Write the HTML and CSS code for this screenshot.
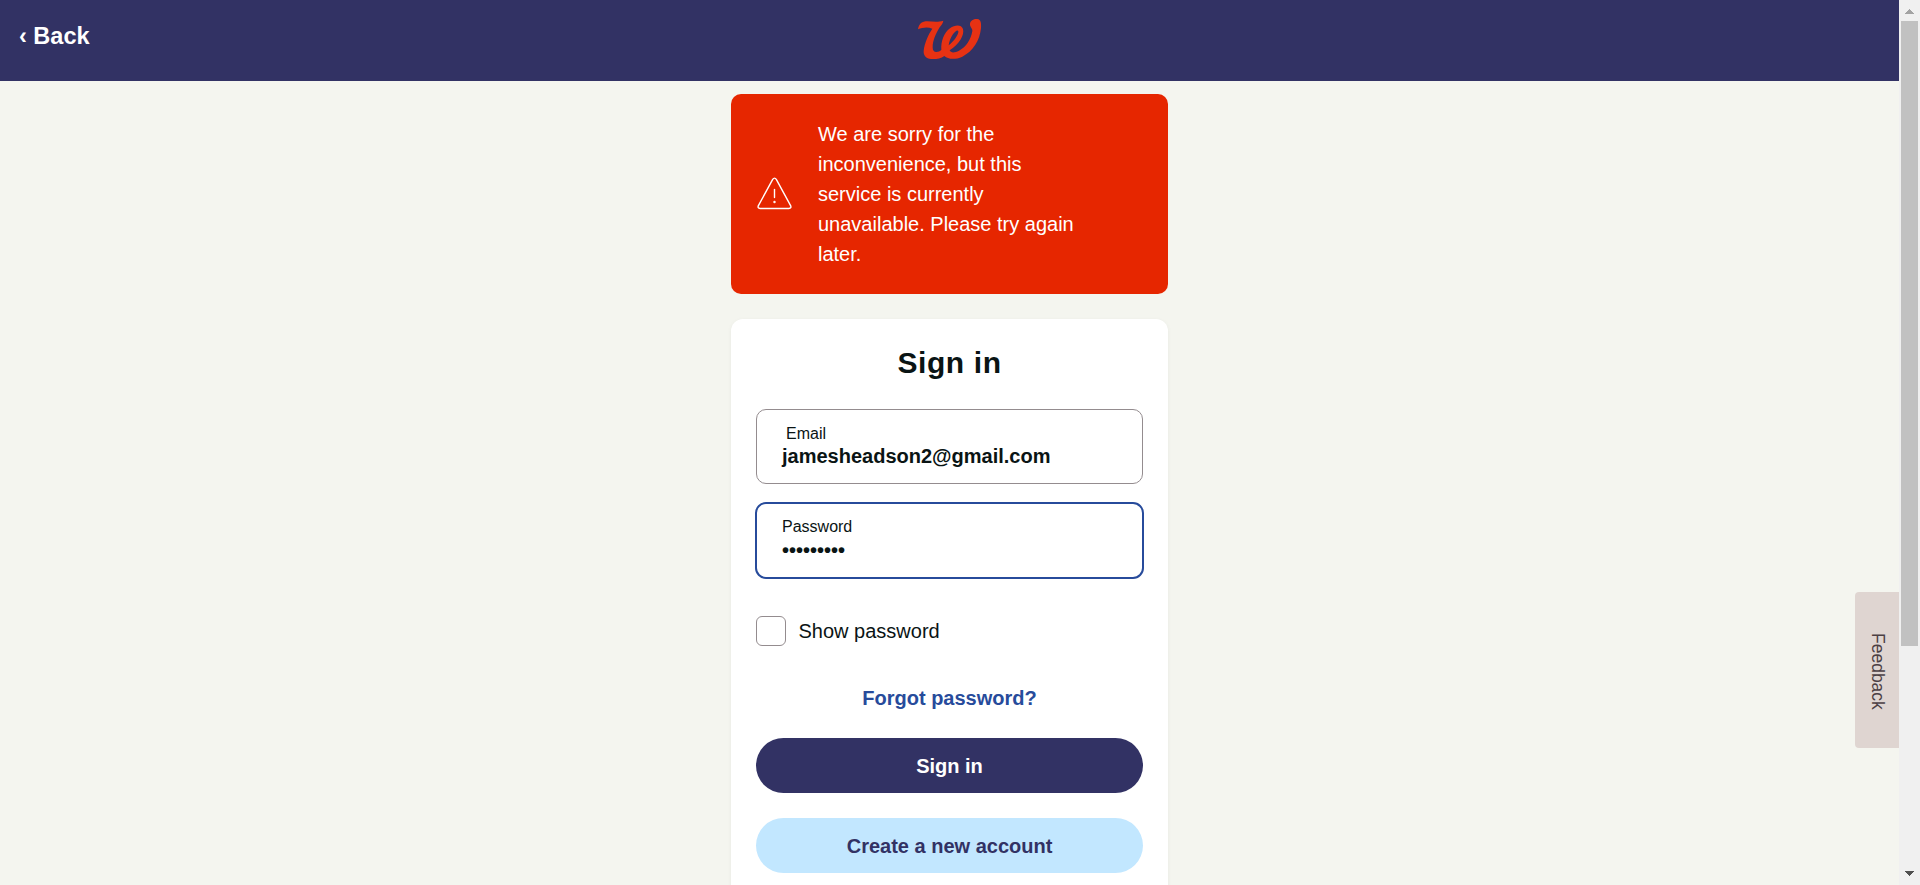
FILE: index.html
```html
<!DOCTYPE html>
<html lang="en">
<head>
<meta charset="utf-8">
<title>Sign in</title>
<link rel="stylesheet" href="styles.css">
</head>
<body>
<div class="viewport">
  <div class="page">
    <header class="header">
      <a class="back">‹ Back</a>
      <svg class="logo" viewBox="0 0 300 195" aria-label="Logo">
        <path fill="#e73213" fill-rule="evenodd" d="M54 73C57 56 66 49 82 49C98 49 113 52 130 47C129 55 124 60 119 67C107 86 98 108 98 127C98 137 102 141 109 141C115 141 120 139 124 135C122 110 132 83 150 70C165 59 184 58 189 72C194 91 176 119 149 136C153 145 165 143 177 137C199 126 213 102 217 78C218 70 209 66 210 56C211 46 222 41 232 42C243 43 244 55 243 70C239 107 219 139 187 155C165 165 144 163 133 153C122 161 107 163 93 162C78 161 70 151 71 138C73 114 86 87 97 71C82 65 67 68 54 73ZM146 121C162 109 176 89 175 79C173 68 150 91 146 121Z"/>
      </svg>
    </header>
    <main class="content">
      <section class="alert">
        <svg class="warning" viewBox="0 0 36 34" fill="none" stroke="#fff" stroke-width="1.4" stroke-linecap="round" stroke-linejoin="round">
          <path d="M15.7 2.4Q17.5-.2 19.3 2.4L33.6 28.6Q34.7 31.3 31.9 31.5H3.1Q.3 31.3 1.4 28.6Z"/>
          <path d="M17.5 12.5V20.5"/>
          <circle cx="17.5" cy="25" r=".5" fill="#fff"/>
        </svg>
        <p class="alert-text">We are sorry for the inconvenience, but this service is currently unavailable. Please try again later.</p>
      </section>
      <section class="card">
        <h1 class="title">Sign in</h1>
        <div class="field">
          <span class="label label-email">Email</span>
          <span class="value">jamesheadson2@gmail.com</span>
        </div>
        <div class="field focused">
          <span class="label">Password</span>
          <span class="value dots">•••••••••</span>
        </div>
        <div class="show"><span class="checkbox"></span>Show password</div>
        <a class="forgot">Forgot password?</a>
        <div class="button primary">Sign in</div>
        <div class="button secondary">Create a new account</div>
      </section>
    </main>
    <div class="feedback"><span>Feedback</span></div>
  </div>
  <div class="scrollbar">
    <svg class="arrow" viewBox="0 0 9 5" fill="#a3a3a3" shape-rendering="crispEdges"><path d="M4 0h1v1h1v1h1v1h1v1h1v1H0V4h1V3h1V2h1V1h1z"/></svg>
    <div class="thumb"></div>
    <svg class="arrow down" viewBox="0 0 9 5" fill="#505050" shape-rendering="crispEdges"><path d="M0 0h9v1H8v1H7v1H6v1H5v1H4V4H3V3H2V2H1V1H0z"/></svg>
  </div>
</div>
</body>
</html>
```
FILE: styles.css
```css
* { box-sizing: border-box; }
body { margin: 0; font-family: "Liberation Sans", Arial, sans-serif; font-size: 20px; color: #0a1414; }
.viewport { display: flex; height: 885px; overflow: hidden; }
.page { position: relative; flex: 1; background: #f4f5ef; }
.header { display: grid; grid-template-columns: 1fr 100px 1fr; height: 81px; background: #323264; }
.back { padding: 22px 0 0 19px; font-size: 23.5px; line-height: 28px; font-weight: bold; color: #fff; }
.logo { width: 100px; height: 65px; margin-top: 5px; }
.content { width: 437px; margin: 13px auto 0; }
.alert { display: flex; align-items: center; height: 200px; padding: 0 25px 0 26px; border-radius: 10px; background: #e62600; color: #fff; }
.warning { width: 36px; height: 34px; flex: none; }
.alert-text { width: 262px; margin: 0 0 0 25px; line-height: 30px; }
.card { display: flex; flex-direction: column; height: 600px; margin-top: 25px; padding: 24px 25px 0; border-radius: 12px; background: #fff; box-shadow: 0 1px 4px rgba(0, 0, 0, .05); }
.title { margin: 0 0 26px; font-size: 30px; line-height: 40px; letter-spacing: .6px; text-align: center; }
.field { display: flex; flex-direction: column; height: 75px; padding: 14px 25px 0; border: 1px solid #948c8f; border-radius: 10px; }
.focused { height: 77px; margin: 18px -1px 0; padding-top: 13px; border: 2px solid #274b9b; border-radius: 11px; }
.label { font-size: 16px; line-height: 20px; }
.label-email { padding-left: 4px; }
.value { font-weight: bold; line-height: 24px; }
.dots { line-height: 26px; }
.show { display: flex; align-items: center; gap: 12.5px; height: 30px; margin-top: 37px; }
.checkbox { width: 30px; height: 30px; border: 1px solid #948c8f; border-radius: 6px; }
.forgot { margin-top: 37px; line-height: 30px; font-weight: bold; color: #274b9b; text-align: center; }
.button { flex: none; height: 55px; margin-top: 25px; border-radius: 28px; line-height: 57px; font-weight: bold; text-align: center; }
.primary { background: #323264; color: #fff; }
.secondary { background: #c2e7ff; color: #323264; }
/* Feedback tab pinned to the right edge */
.feedback { position: absolute; right: 0; top: 592px; display: flex; align-items: center; justify-content: center; width: 44px; height: 156px; padding-top: 2px; border-radius: 4px 0 0 4px; background: #dfd5d1; color: #4c4044; font-size: 17.5px; writing-mode: vertical-rl; }
.scrollbar { display: flex; flex-direction: column; align-items: center; width: 21px; padding: 9px 0; background: #f0f0f0; }
.arrow { width: 9px; height: 5px; }
.thumb { width: 17px; height: 625px; margin-top: 7px; background: #c1c1c1; }
.down { margin-top: auto; }
```
